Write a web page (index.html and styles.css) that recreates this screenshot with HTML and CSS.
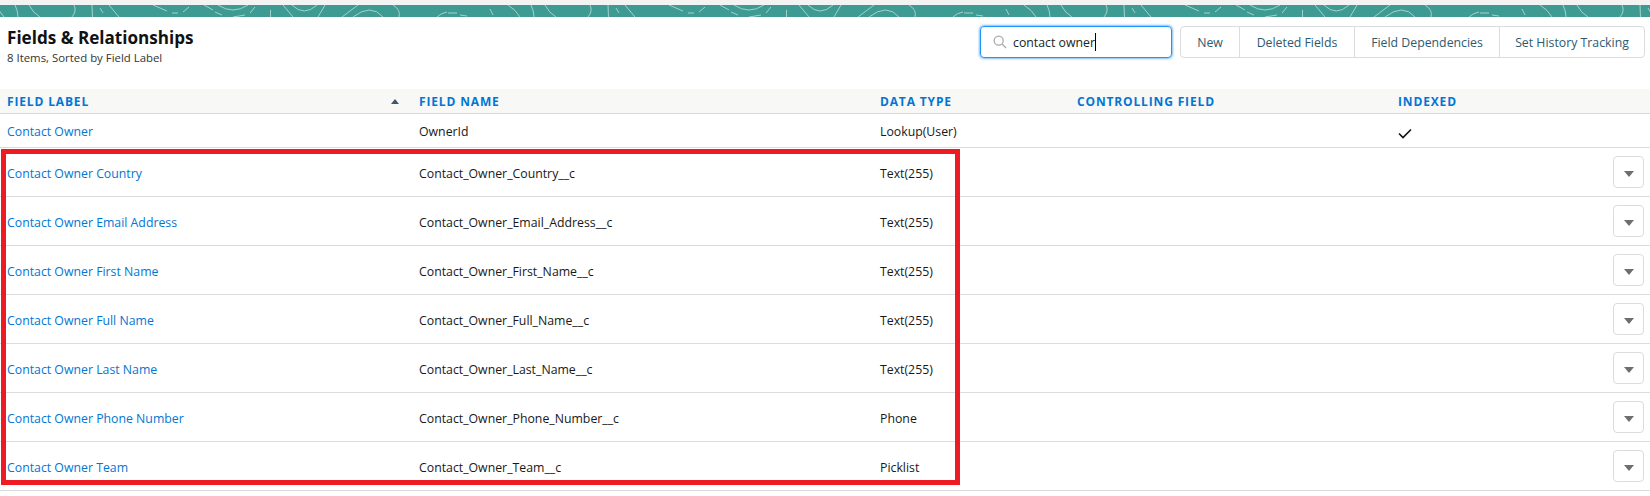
FILE: index.html
```html
<!DOCTYPE html>
<html lang="en">
<head>
    <meta charset="UTF-8">
    <title>Fields &amp; Relationships</title>
    <link rel="stylesheet" href="styles.css">
</head>
<body>
    <div class="top-strip"></div>
    <div class="banner">
        <svg class="banner-art" width="100%" height="12">
            <defs>
                <pattern id="contours" width="516" height="12" patternUnits="userSpaceOnUse">
                    <path class="contour" d="M-8 0Q0 5 4 12M15 0Q18 6 18 12M29 0Q33 8 40 12M74 0Q77 6 72 12M92 0L92.500 12M100 3L103 8M109 0L119 12"/>
                    <path class="contour" d="M153 0L167 6M172 8L178 8M183 7L189 2M204 0L213 5M215 7L222 10M218 0Q233 10 248 0M255 2L250 8M245 10L233 12M270.500 5L270.500 12"/>
                    <path class="contour" d="M283 0L293 12M292 0Q304 12 317 0M325 0L318 12M358 0L342 12M353 12Q371 -2 383 12M393 0Q401 5 399 12"/>
                    <path class="contour" d="M437 12Q441 8 447 7M448 8L457 8M460 10L467 11M490 4L493 10M508 0Q516 5 520 12"/>
                </pattern>
            </defs>
            <rect width="100%" height="12" fill="url(#contours)"/>
        </svg>
    </div>

    <div class="page-head">
        <div class="titles">
            <h1>Fields &amp; Relationships</h1>
            <p>8 Items, Sorted by Field Label</p>
        </div>
        <div class="actions">
            <div class="search-box">
                <svg class="search-icon" viewBox="0 0 14 14"><circle cx="5.700" cy="5.700" r="4.500"/><path d="M9 9l4 4"/></svg>
                <span class="search-text">contact owner</span><span class="caret"></span>
            </div>
            <div class="btn-group">
                <a class="btn btn-new">New</a>
                <a class="btn btn-deleted">Deleted Fields</a>
                <a class="btn btn-deps">Field Dependencies</a>
                <a class="btn btn-history">Set History Tracking</a>
            </div>
        </div>
    </div>

    <div class="grid-table">
        <div class="row head-row">
            <div class="cell col-label">FIELD LABEL<span class="sort-arrow"></span></div>
            <div class="cell">FIELD NAME</div>
            <div class="cell">DATA TYPE</div>
            <div class="cell">CONTROLLING FIELD</div>
            <div class="cell">INDEXED</div>
        </div>
        <div class="row first-row">
            <div class="cell"><a>Contact Owner</a></div>
            <div class="cell">OwnerId</div>
            <div class="cell">Lookup(User)</div>
            <div class="cell"></div>
            <div class="cell"><svg class="check" viewBox="0 0 14 11"><path d="M1 5.500l4 4 8-8"/></svg></div>
        </div>
        <div class="custom-rows">
            <div class="row">
                <div class="cell"><a>Contact Owner Country</a></div>
                <div class="cell">Contact_Owner_Country__c</div>
                <div class="cell">Text(255)</div>
                <div class="cell"></div><div class="cell"></div>
                <button class="menu-btn"><span></span></button>
            </div>
            <div class="row">
                <div class="cell"><a>Contact Owner Email Address</a></div>
                <div class="cell">Contact_Owner_Email_Address__c</div>
                <div class="cell">Text(255)</div>
                <div class="cell"></div><div class="cell"></div>
                <button class="menu-btn"><span></span></button>
            </div>
            <div class="row">
                <div class="cell"><a>Contact Owner First Name</a></div>
                <div class="cell">Contact_Owner_First_Name__c</div>
                <div class="cell">Text(255)</div>
                <div class="cell"></div><div class="cell"></div>
                <button class="menu-btn"><span></span></button>
            </div>
            <div class="row">
                <div class="cell"><a>Contact Owner Full Name</a></div>
                <div class="cell">Contact_Owner_Full_Name__c</div>
                <div class="cell">Text(255)</div>
                <div class="cell"></div><div class="cell"></div>
                <button class="menu-btn"><span></span></button>
            </div>
            <div class="row">
                <div class="cell"><a>Contact Owner Last Name</a></div>
                <div class="cell">Contact_Owner_Last_Name__c</div>
                <div class="cell">Text(255)</div>
                <div class="cell"></div><div class="cell"></div>
                <button class="menu-btn"><span></span></button>
            </div>
            <div class="row">
                <div class="cell"><a>Contact Owner Phone Number</a></div>
                <div class="cell">Contact_Owner_Phone_Number__c</div>
                <div class="cell">Phone</div>
                <div class="cell"></div><div class="cell"></div>
                <button class="menu-btn"><span></span></button>
            </div>
            <div class="row">
                <div class="cell"><a>Contact Owner Team</a></div>
                <div class="cell">Contact_Owner_Team__c</div>
                <div class="cell">Picklist</div>
                <div class="cell"></div><div class="cell"></div>
                <button class="menu-btn"><span></span></button>
            </div>
            <div class="red-box"></div>
        </div>
    </div>
</body>
</html>
```

FILE: styles.css
```css
body {
    font-family: "Open Sans", "Noto Sans", sans-serif;
    font-size: 12.3px;
    margin: 0;
    padding: 0;
    background-color: #fff;
    color: #181818;
    overflow: hidden;
}

.top-strip {
    height: 5px;
    background-color: #f3f3f3;
}

.banner {
    height: 12px;
    background-color: #3e9b93;
}

.banner-art {
    display: block;
}

.contour {
    fill: none;
    stroke: #a4d0ca;
    stroke-width: 1;
}

.page-head {
    height: 72px;
    display: flex;
    justify-content: space-between;
    box-sizing: border-box;
    padding: 9px 5px 0 7px;
}

.titles h1 {
    margin: 2px 0 0;
    font-size: 17.1px;
    line-height: 20px;
    font-weight: 700;
    color: #111;
}

.titles p {
    margin: 2px 0 0;
    font-size: 11.4px;
    line-height: 15px;
    color: #333;
}

.actions {
    display: flex;
    gap: 8px;
    align-items: flex-start;
}

.search-box {
    width: 192px;
    height: 32px;
    box-sizing: border-box;
    border: 1px solid #1b96ff;
    border-radius: 4px;
    box-shadow: 0 0 3px #0176d3;
    display: flex;
    align-items: center;
    padding-left: 12px;
}

.search-icon {
    width: 14px;
    height: 14px;
    margin-right: 6px;
    fill: none;
    stroke: #aaa;
    stroke-width: 1.3;
}

.search-text {
    color: #222;
}

.caret {
    width: 1px;
    height: 18px;
    background-color: #000;
}

.btn-group {
    display: flex;
    height: 32px;
    box-sizing: border-box;
    border: 1px solid #dcdcdc;
    border-radius: 4px;
}

.btn {
    box-sizing: border-box;
    display: flex;
    align-items: center;
    justify-content: center;
    color: #2e5a6e;
    border-left: 1px solid #dcdcdc;
}

.btn-new { width: 58px; border-left: 0; }
.btn-deleted { width: 115px; }
.btn-deps { width: 145px; }
.btn-history { width: 145px; }

.row {
    display: grid;
    grid-template-columns: 412px 461px 197px 321px 1fr;
    position: relative;
    box-sizing: border-box;
    height: 49px;
    border-bottom: 1px solid #dcdcdc;
    padding-left: 7px;
    align-items: center;
}

.cell {
    padding-top: 2px;
}

.cell a {
    color: #0176d3;
}

.head-row {
    height: 25px;
    background-color: #f8f8f6;
    border-bottom: 1px solid #d8d8d8;
    font-size: 12px;
    font-weight: 700;
    color: #0176d3;
    letter-spacing: 0.85px;
}

.head-row .cell {
    padding-top: 0;
}

.col-label {
    position: relative;
}

.sort-arrow {
    position: absolute;
    left: 384px;
    top: 6px;
    width: 0;
    height: 0;
    border-left: 4px solid transparent;
    border-right: 4px solid transparent;
    border-bottom: 5px solid #3e5770;
}

.first-row {
    height: 34px;
}

.first-row .check {
    margin-top: 3px;
}

.check {
    display: block;
    width: 14px;
    height: 11px;
    fill: none;
    stroke: #111;
    stroke-width: 1.6;
}

.custom-rows {
    position: relative;
}

.menu-btn {
    position: absolute;
    right: 6px;
    top: 8px;
    width: 31px;
    height: 32px;
    padding: 3px 0 0;
    background: #fff;
    border: 1px solid #dcdcdc;
    border-radius: 4px;
    display: flex;
    align-items: center;
    justify-content: center;
}

.menu-btn span {
    width: 0;
    height: 0;
    border-left: 5px solid transparent;
    border-right: 5px solid transparent;
    border-top: 6px solid #706e6b;
}

.red-box {
    position: absolute;
    left: 1px;
    top: 1px;
    width: 959px;
    height: 336px;
    box-sizing: border-box;
    border: 5px solid #ed1c24;
}
```
